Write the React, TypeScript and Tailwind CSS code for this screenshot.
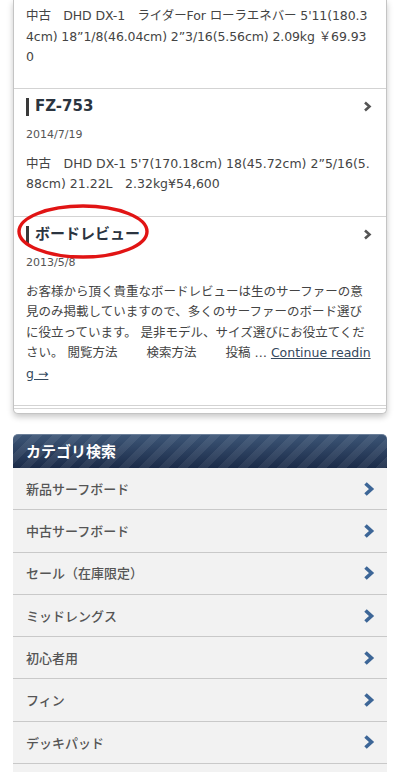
import React from "react";

const body = "font-['DejaVu_Sans','Noto_Sans_CJK_JP',sans-serif]";

function GrayChevron() {
  return (
    <svg width="9" height="11" viewBox="0 0 9 11" className="shrink-0">
      <polyline points="2,1.5 6.5,5.5 2,9.5" fill="none" stroke="#555" strokeWidth="2.6" />
    </svg>
  );
}

function BlueChevron() {
  return (
    <svg width="12" height="14" viewBox="0 0 12 14" className="shrink-0">
      <polyline points="2.5,1.5 8.5,7 2.5,12.5" fill="none" stroke="#3d6697" strokeWidth="3.6" />
    </svg>
  );
}

function Post({
  title,
  titleSize,
  date,
  children,
  annotate,
}: {
  title: string;
  titleSize: string;
  date: string;
  children: React.ReactNode;
  annotate?: boolean;
}) {
  return (
    <div className="relative border-b border-[#d3d3d3] pl-[12px] pr-[15px] pt-[7px] pb-[21px]">
      {annotate && (
        <svg
          className="absolute left-[3px] top-[-13px] pointer-events-none"
          width="134"
          height="56"
          viewBox="0 0 134 56"
        >
          <ellipse cx="66" cy="27.5" rx="64" ry="25.5" fill="none" stroke="#e11414" strokeWidth="3.4" />
        </svg>
      )}
      <div className="flex h-[22px] items-center justify-between">
        <div className="flex items-center gap-[6px]">
          <span className="block h-[18px] w-[3px] bg-[#3a3a3a]" />
          <span className={`${body} ${titleSize} font-bold text-[#2b3440] leading-none`}>{title}</span>
        </div>
        <span className="mr-[-1px]">
          <GrayChevron />
        </span>
      </div>
      <div className={`${body} mt-[9px] text-[11px] leading-[16px] text-[#555]`}>{date}</div>
      <p className={`${body} mt-[11px] break-all text-[12.5px] leading-[20.5px] text-[#444]`}>{children}</p>
    </div>
  );
}

const categories = [
  "新品サーフボード",
  "中古サーフボード",
  "セール（在庫限定）",
  "ミッドレングス",
  "初心者用",
  "フィン",
  "デッキパッド",
];

export default function App() {
  return (
    <div className="min-h-[772px] w-[400px] overflow-hidden bg-white">
      {/* posts card */}
      <div className="mx-[13px] rounded-b-[5px] border-x border-b border-[#c4c4c4] bg-white shadow-[0_3px_6px_rgba(0,0,0,0.22)]">
        <div className="border-b border-[#d3d3d3] pl-[12px] pr-[15px] pt-[6px] pb-[20px]">
          <p className={`${body} whitespace-nowrap text-[12.5px] leading-[20.5px] tracking-[-0.1px] text-[#444]`}>
            中古　DHD DX-1　ライダーFor ローラエネバー 5'11(180.3
            <br />
            4cm) 18”1/8(46.04cm) 2”3/16(5.56cm) 2.09kg ￥69.93
            <br />0
          </p>
        </div>
        <Post title="FZ-753" titleSize="text-[15px]" date="2014/7/19">
          中古　DHD DX-1 5'7(170.18cm) 18(45.72cm) 2”5/16(5.88cm) 21.22L　2.32kg¥54,600
        </Post>
        <Post title="ボードレビュー" titleSize="text-[15px]" date="2013/5/8" annotate>
          お客様から頂く貴重なボードレビューは生のサーファーの意見のみ掲載していますので、多くのサーファーのボード選びに役立っています。 是非モデル、サイズ選びにお役立てください。 閲覧方法 　　検索方法 　　投稿 …{" "}
          <a className="text-[#34495e] underline">Continue reading →</a>
        </Post>
        <div className="mt-[2px] h-[5px] border-t border-[#d6d6d6]" />
      </div>

      {/* category search */}
      <div className="mx-[13px] mt-[20px]">
        <div className="flex h-[34px] items-center rounded-t-[5px] border-t border-[#6b7f99] bg-[image:repeating-linear-gradient(135deg,rgba(255,255,255,0.07)_0px,rgba(255,255,255,0.07)_7px,transparent_7px,transparent_14px),linear-gradient(#3c5576,#1b2b48)] px-[13px]">
          <span className="font-['Noto_Sans_CJK_JP',sans-serif] text-[15px] font-bold text-white">カテゴリ検索</span>
        </div>
        {categories.map((c) => (
          <div
            key={c}
            className="flex h-[42.3px] items-center justify-between border-b border-[#c9c9c9] bg-[#f2f2f2] pl-[13px] pr-[12px]"
          >
            <span className="font-['Noto_Sans_CJK_JP',sans-serif] text-[13px] font-medium text-[#555]">{c}</span>
            <BlueChevron />
          </div>
        ))}
        <div className="h-[42px] bg-[#f2f2f2]" />
      </div>
    </div>
  );
}
